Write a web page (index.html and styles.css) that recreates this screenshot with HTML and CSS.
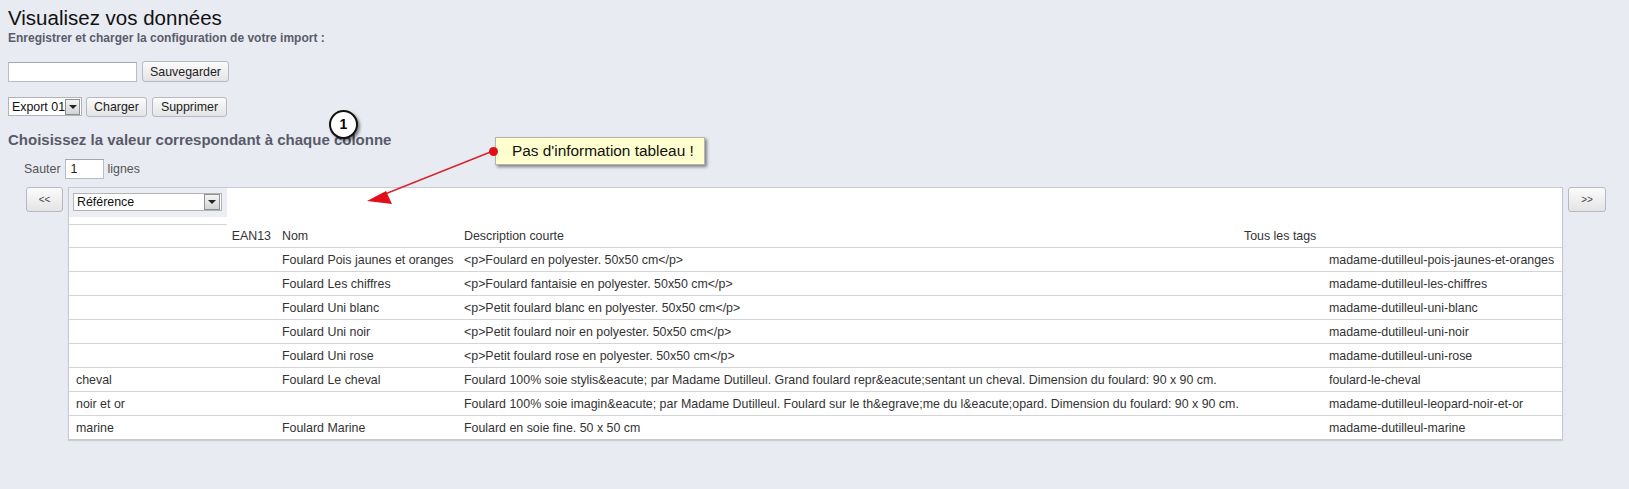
FILE: index.html
```html
<!DOCTYPE html>
<html lang="fr">

<head>
    <meta charset="UTF-8">
    <title>Visualisez vos données</title>
    <link rel="stylesheet" href="styles.css">
</head>

<body>
    <div class="page">
        <h1 class="title">Visualisez vos données</h1>
        <div class="subtitle">Enregistrer et charger la configuration de votre import :</div>

        <!-- sauvegarde de la config -->
        <div class="form-row save-row">
            <input type="text" class="text-input name-input">
            <button class="btn">Sauvegarder</button>
        </div>

        <div class="form-row load-row">
            <div class="fake-select export-select">
                <span class="fake-select-label">Export 01</span>
                <span class="drop"></span>
            </div>
            <button class="btn">Charger</button>
            <button class="btn">Supprimer</button>
        </div>

        <h2 class="section-title">Choisissez la valeur correspondant à chaque colonne</h2>

        <div class="skip-row">
            Sauter <input type="text" class="text-input skip-input" value="1"> lignes
        </div>

        <!-- tableau + navigation -->
        <div class="nav-row">
            <button class="btn nav-btn">&lt;&lt;</button>

            <table class="data-table">
                <colgroup>
                    <col style="width:158px">
                    <col style="width:47px">
                    <col style="width:182px">
                    <col style="width:780px">
                    <col style="width:85px">
                    <col style="width:241px">
                </colgroup>
                <tr class="pick-row">
                    <td class="pick-cell">
                        <div class="pick">
                            <div class="fake-select col-select">
                                <span class="fake-select-label">Référence</span>
                                <span class="drop"></span>
                            </div>
                        </div>
                    </td>
                    <td></td><td></td><td></td><td></td><td></td>
                </tr>
                <tr class="head-row">
                    <td></td>
                    <td class="right">EAN13</td>
                    <td>Nom</td>
                    <td>Description courte</td>
                    <td>Tous les tags</td>
                    <td></td>
                </tr>
                <tr>
                    <td></td><td></td>
                    <td>Foulard Pois jaunes et oranges</td>
                    <td>&lt;p&gt;Foulard en polyester. 50x50 cm&lt;/p&gt;</td>
                    <td></td>
                    <td>madame-dutilleul-pois-jaunes-et-oranges</td>
                </tr>
                <tr>
                    <td></td><td></td>
                    <td>Foulard Les chiffres</td>
                    <td>&lt;p&gt;Foulard fantaisie en polyester. 50x50 cm&lt;/p&gt;</td>
                    <td></td>
                    <td>madame-dutilleul-les-chiffres</td>
                </tr>
                <tr>
                    <td></td><td></td>
                    <td>Foulard Uni blanc</td>
                    <td>&lt;p&gt;Petit foulard blanc en polyester. 50x50 cm&lt;/p&gt;</td>
                    <td></td>
                    <td>madame-dutilleul-uni-blanc</td>
                </tr>
                <tr>
                    <td></td><td></td>
                    <td>Foulard Uni noir</td>
                    <td>&lt;p&gt;Petit foulard noir en polyester. 50x50 cm&lt;/p&gt;</td>
                    <td></td>
                    <td>madame-dutilleul-uni-noir</td>
                </tr>
                <tr>
                    <td></td><td></td>
                    <td>Foulard Uni rose</td>
                    <td>&lt;p&gt;Petit foulard rose en polyester. 50x50 cm&lt;/p&gt;</td>
                    <td></td>
                    <td>madame-dutilleul-uni-rose</td>
                </tr>
                <tr>
                    <td>cheval</td><td></td>
                    <td>Foulard Le cheval</td>
                    <td>Foulard 100% soie stylis&amp;eacute; par Madame Dutilleul. Grand foulard repr&amp;eacute;sentant un cheval. Dimension du foulard: 90 x 90 cm.</td>
                    <td></td>
                    <td>foulard-le-cheval</td>
                </tr>
                <tr>
                    <td>noir et or</td><td></td>
                    <td></td>
                    <td>Foulard 100% soie imagin&amp;eacute; par Madame Dutilleul. Foulard sur le th&amp;egrave;me du l&amp;eacute;opard. Dimension du foulard: 90 x 90 cm.</td>
                    <td></td>
                    <td>madame-dutilleul-leopard-noir-et-or</td>
                </tr>
                <tr class="last">
                    <td>marine</td><td></td>
                    <td>Foulard Marine</td>
                    <td>Foulard en soie fine. 50 x 50 cm</td>
                    <td></td>
                    <td>madame-dutilleul-marine</td>
                </tr>
            </table>

            <button class="btn nav-btn">&gt;&gt;</button>
        </div>
    </div>

    <!-- annotations par dessus la capture -->
    <div class="step-badge">1</div>

    <svg class="arrow" width="1629" height="489" viewBox="0 0 1629 489">
        <line x1="493" y1="151" x2="380" y2="196" stroke="#d8232a" stroke-width="1.4"></line>
        <polygon points="367,201 386,191 392,204" fill="#e0101a"></polygon>
    </svg>

    <div class="note">Pas d'information tableau !</div>
    <div class="note-dot"></div>
</body>

</html>
```

FILE: styles.css
```css
/* base */
body {
    margin: 0;
    padding: 0;
    background: #e9ebf3;
    font-family: "Liberation Sans", Arial, sans-serif;
    font-size: 12px;
    color: #333;
    position: relative;
    min-height: 489px;
    overflow: hidden;
}

.page {
    padding: 0 8px;
}

/* titres */
.title {
    margin: 6px 0 0;
    font-size: 20.5px;
    line-height: 23px;
    font-weight: normal;
    color: #111;
}

.subtitle {
    margin-top: 2px;
    font-size: 12px;
    line-height: 14px;
    font-weight: bold;
    color: #5a5c6b;
}

.section-title {
    margin: 16px 0 0;
    font-size: 15px;
    line-height: 16px;
    font-weight: bold;
    color: #585a69;
}

/* formulaires */
.form-row {
    display: flex;
    align-items: center;
}

.save-row {
    margin-top: 16px;
    height: 21px;
    gap: 5px;
}

.load-row {
    margin-top: 15px;
    height: 19px;
    gap: 4px;
}

.load-row .btn + .btn {
    margin-left: 1px;
}

.text-input {
    box-sizing: border-box;
    height: 20px;
    border: 1px solid #b9bcc2;
    border-top-color: #a4a7ad;
    background: #fff;
    padding: 0 5px;
    font-family: inherit;
    font-size: 12.4px;
    color: #222;
    outline: none;
}

.name-input {
    width: 129px;
}

.btn {
    box-sizing: border-box;
    height: 21px;
    padding: 0 6px;
    border: 1px solid #b7b9be;
    border-radius: 3px;
    background: linear-gradient(#fbfbfb, #e4e4e6);
    font-family: inherit;
    font-size: 12.4px;
    color: #222;
    cursor: pointer;
}

.save-row .btn {
    width: 87px;
}

.load-row .btn {
    height: 20px;
}

.load-row .btn:nth-of-type(1) {
    width: 61px;
}

.load-row .btn:nth-of-type(2) {
    width: 75px;
}

/* faux select */
.fake-select {
    box-sizing: border-box;
    display: flex;
    align-items: center;
    background: #fff;
    border: 1px solid #b0b3b8;
    font-size: 12.4px;
    color: #111;
}

.fake-select-label {
    flex: 1;
    padding-left: 3px;
    white-space: nowrap;
}

.drop {
    position: relative;
    width: 14px;
    height: 14px;
    margin-right: 1px;
    border: 1px solid #8d9095;
    background: linear-gradient(#f4f4f4, #d4d4d6);
}

.drop::after {
    content: '';
    position: absolute;
    left: 3px;
    top: 5px;
    border-left: 4px solid transparent;
    border-right: 4px solid transparent;
    border-top: 4px solid #222;
}

.export-select {
    width: 74px;
    height: 19px;
}

.col-select {
    width: 149px;
    height: 18px;
}

/* sauter n lignes */
.skip-row {
    margin-top: 11px;
    padding-left: 16px;
    display: flex;
    align-items: center;
    gap: 4px;
    height: 20px;
    font-size: 12.4px;
    color: #555;
}

.skip-input {
    width: 39px;
    padding: 0 5px;
}

/* tableau */
.nav-row {
    margin-top: 8px;
    padding-left: 18px;
    display: flex;
    align-items: flex-start;
    gap: 5px;
}

.nav-btn {
    width: 37px;
    height: 25px;
    font-size: 10px;
    color: #444;
}

.nav-row .nav-btn:last-child {
    width: 38px;
}

.data-table {
    table-layout: fixed;
    width: 1495px;
    border-collapse: separate;
    border-spacing: 0;
    background: #fff;
    border: 1px solid #c8cacf;
    box-shadow: 0 1px 1px rgba(0, 0, 0, 0.12);
}

.data-table td {
    height: 23px;
    padding: 0 0 0 8px;
    border-bottom: 1px solid #d3d4d8;
    white-space: nowrap;
    overflow: visible;
    font-size: 12.4px;
    color: #333;
    line-height: 14px;
}

.data-table td:first-child {
    padding-left: 7px;
}

.data-table .right {
    text-align: right;
    padding: 0 3px 0 0;
}

.data-table tr.last td {
    border-bottom: none;
}

.head-row td {
    height: 22px;
}

.data-table .pick-row td {
    height: 36px;
    border-bottom: none;
    padding: 0;
}

.data-table .pick-row td.pick-cell {
    padding: 0;
    vertical-align: top;
    border-bottom: 1px solid #d3d4d8;
}

.pick {
    height: 29px;
    box-sizing: border-box;
    padding: 5px 0 0 4px;
    background: #eceef3;
}

/* annotations */
.step-badge {
    position: absolute;
    left: 329px;
    top: 110px;
    width: 25px;
    height: 25px;
    border: 2px solid #111;
    border-radius: 50%;
    background: #fff;
    box-shadow: 2px 2px 3px rgba(0, 0, 0, 0.45);
    text-align: center;
    font-size: 14px;
    font-weight: bold;
    line-height: 25px;
    color: #000;
}

.arrow {
    position: absolute;
    left: 0;
    top: 0;
    pointer-events: none;
}

.note {
    position: absolute;
    left: 495px;
    top: 137px;
    width: 210px;
    height: 28px;
    box-sizing: border-box;
    padding-left: 16px;
    background: #ffffcf;
    border: 1px solid #b6b6a6;
    box-shadow: 2px 2px 3px rgba(0, 0, 0, 0.45);
    font-size: 15.4px;
    line-height: 26px;
    color: #111;
}

.note-dot {
    position: absolute;
    left: 489px;
    top: 147px;
    width: 9px;
    height: 9px;
    border-radius: 50%;
    background: #e0101a;
}
```
